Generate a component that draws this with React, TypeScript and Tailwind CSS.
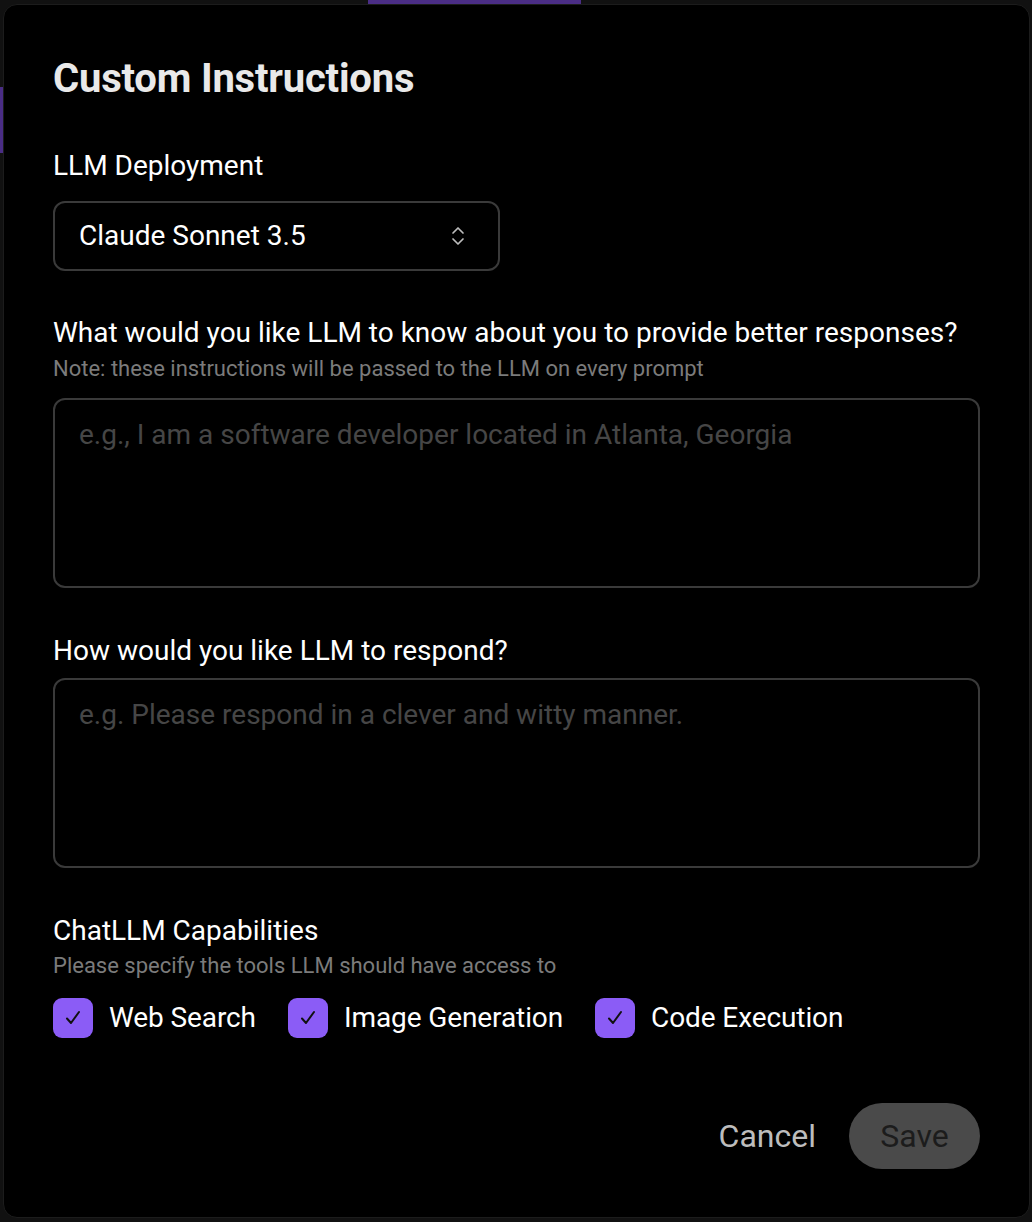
import { useState } from 'react';

type Tool = { id: string; label: string };

const TOOLS: Tool[] = [
  { id: 'web', label: 'Web Search' },
  { id: 'image', label: 'Image Generation' },
  { id: 'code', label: 'Code Execution' },
];

const ChevronUpDown = () => (
  <svg width="16" height="26" viewBox="0 0 16 26" fill="none" stroke="#bdbdbd" strokeWidth="1.7" strokeLinecap="round" strokeLinejoin="round">
    <path d="M3 10l5-5 5 5" />
    <path d="M3 16l5 5 5-5" />
  </svg>
);

const CheckBox = ({ checked, onToggle }: { checked: boolean; onToggle: () => void }) => (
  <button
    type="button"
    onClick={onToggle}
    className={`flex h-[40px] w-[40px] shrink-0 items-center justify-center rounded-[9px] ${checked ? 'bg-[#8b5cf6]' : 'border-2 border-[#555]'}`}
  >
    {checked ? (
      <svg width="20" height="20" viewBox="0 0 20 20" fill="none" stroke="#111" strokeWidth="2" strokeLinecap="round" strokeLinejoin="round">
        <path d="M4 10.5l4 4.5 8-11" />
      </svg>
    ) : null}
  </button>
);

const App: React.FC = () => {
  const [enabled, setEnabled] = useState<Record<string, boolean>>({ web: true, image: true, code: true });

  return (
    <div className="grid h-[1222px] w-full grid-cols-[3px_1fr_2px] grid-rows-[4px_1fr_4px] bg-[#111111] font-['Roboto',sans-serif]">
      {/* top strip of the page behind the modal */}
      <div />
      <div className="flex">
        <div className="ml-[365px] h-[4px] w-[213px] bg-[#4a2d85]" />
      </div>
      <div />

      {/* left strip */}
      <div className="flex flex-col">
        <div className="mt-[83px] h-[66px] w-[3px] bg-[#4a2d85]" />
      </div>

      <div className="flex flex-col rounded-[14px] border border-[#1c1c1c] bg-black px-[49px] pt-[50px]">
        <h2 className="text-[40px] font-bold leading-[48px] tracking-[-0.2px] text-[#e9e9e9]">Custom Instructions</h2>

        <label className="mt-[45px] text-[28px] leading-[36px] text-white">LLM Deployment</label>
        <button
          type="button"
          className="mt-[17px] flex h-[70px] w-[447px] items-center justify-between rounded-[12px] border-2 border-[#3a3a3a] pl-[24px] pr-[32px] text-[28px] text-white"
        >
          <span>Claude Sonnet 3.5</span>
          <ChevronUpDown />
        </button>

        <label className="mt-[44px] text-[28px] leading-[36px] text-white">
          What would you like LLM to know about you to provide better responses?
        </label>
        <p className="mt-[4px] text-[22px] leading-[28px] text-[#7b7b7b]">
          Note: these instructions will be passed to the LLM on every prompt
        </p>
        <textarea
          className="mt-[15px] h-[190px] w-full resize-none rounded-[12px] border-2 border-[#3a3a3a] bg-transparent px-[24px] py-[17px] text-[28px] leading-[36px] text-white outline-none placeholder:text-[#464646]"
          placeholder="e.g., I am a software developer located in Atlanta, Georgia"
        />

        <label className="mt-[45px] text-[28px] leading-[36px] text-white">How would you like LLM to respond?</label>
        <textarea
          className="mt-[9px] h-[190px] w-full resize-none rounded-[12px] border-2 border-[#3a3a3a] bg-transparent px-[24px] py-[17px] text-[28px] leading-[36px] text-white outline-none placeholder:text-[#464646]"
          placeholder="e.g. Please respond in a clever and witty manner."
        />

        <label className="mt-[45px] text-[28px] leading-[36px] text-white">ChatLLM Capabilities</label>
        <p className="mt-[3px] text-[22px] leading-[28px] text-[#7b7b7b]">Please specify the tools LLM should have access to</p>

        <div className="mt-[18px] flex items-center gap-[32px]">
          {TOOLS.map((tool) => (
            <div key={tool.id} className="flex items-center gap-[16px]">
              <CheckBox
                checked={enabled[tool.id]}
                onToggle={() => setEnabled((prev) => ({ ...prev, [tool.id]: !prev[tool.id] }))}
              />
              <span className="text-[28px] leading-[36px] tracking-[-0.1px] text-white">{tool.label}</span>
            </div>
          ))}
        </div>

        <div className="mt-[65px] flex items-center justify-end gap-[33px]">
          <button type="button" className="text-[32px] text-[#bdbdbd]">
            Cancel
          </button>
          <button
            type="button"
            className="h-[66px] w-[131px] rounded-full bg-[#4a4a4a] text-[32px] text-[#1c1c1c]"
          >
            Save
          </button>
        </div>
      </div>

      <div />
      <div />
      <div />
      <div />
    </div>
  );
};

export default App;
